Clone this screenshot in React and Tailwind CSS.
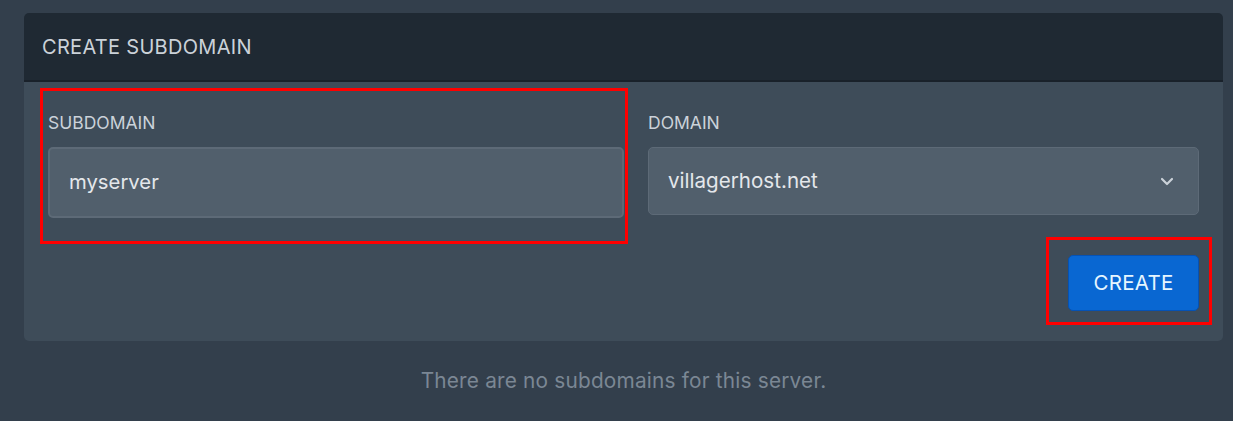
import React from "react";

export default function App() {
  const font = { fontFamily: "Inter, Roboto, 'Noto Sans', sans-serif" };
  return (
    <div className="min-h-[421px] w-full bg-[#333f4c] pt-[13px] pl-[24px] pr-[10px]" style={font}>
      <div className="rounded-[5px] overflow-hidden">
        <div className="h-[69px] bg-[#1f2933] border-b-2 border-[#19212a] flex items-center pl-[18px]">
          <h2 className="text-[20px] text-[#cbd2d9] tracking-[0.3px] uppercase">Create Subdomain</h2>
        </div>
        <div className="relative bg-[#3e4c59] px-[24px] pt-[29px] pb-[30px]">
          <div className="flex gap-[24px]">
            <div className="w-[576px]">
              <label className="block text-[17.5px] leading-[24px] text-[#cbd2d9] uppercase">Subdomain</label>
              <div className="mt-[12px] h-[71px] rounded-[5px] bg-[#515f6c] border-2 border-[#5d6a77] flex items-center pl-[19px] text-[20.3px] text-[#e4e7eb]">
                myserver
              </div>
            </div>
            <div className="w-[551px]">
              <label className="block text-[17.5px] leading-[24px] text-[#cbd2d9] uppercase">Domain</label>
              <div className="mt-[12px] h-[68px] rounded-[5px] bg-[#515f6c] border border-[#5d6a77] flex items-center justify-between pl-[19px] pr-[24px] text-[20.6px] text-[#e4e7eb]">
                <span>villagerhost.net</span>
                <svg width="14" height="9" viewBox="0 0 14 9" fill="none">
                  <path d="M2 2l5 5 5-5" stroke="#cbd2d9" strokeWidth="2.2" strokeLinecap="round" strokeLinejoin="round" />
                </svg>
              </div>
            </div>
          </div>
          <div className="flex justify-end mt-[37px]">
            <button className="w-[131px] h-[56px] rounded-[5px] bg-[#0967d2] border border-[#0552b5] text-[20.5px] text-[#e6f6ff] uppercase tracking-[0.3px]">
              Create
            </button>
          </div>
          <div className="pointer-events-none absolute left-[16px] top-[6px] w-[588px] h-[156px] border-[3px] border-[#ff0000]" />
          <div className="pointer-events-none absolute left-[1022px] top-[155px] w-[166px] h-[88px] border-[3px] border-[#ff0000]" />
        </div>
      </div>
      <p className="mt-[24px] text-center text-[20.8px] text-[#7b8794] tracking-[0.2px]">
        There are no subdomains for this server.
      </p>
    </div>
  );
}
